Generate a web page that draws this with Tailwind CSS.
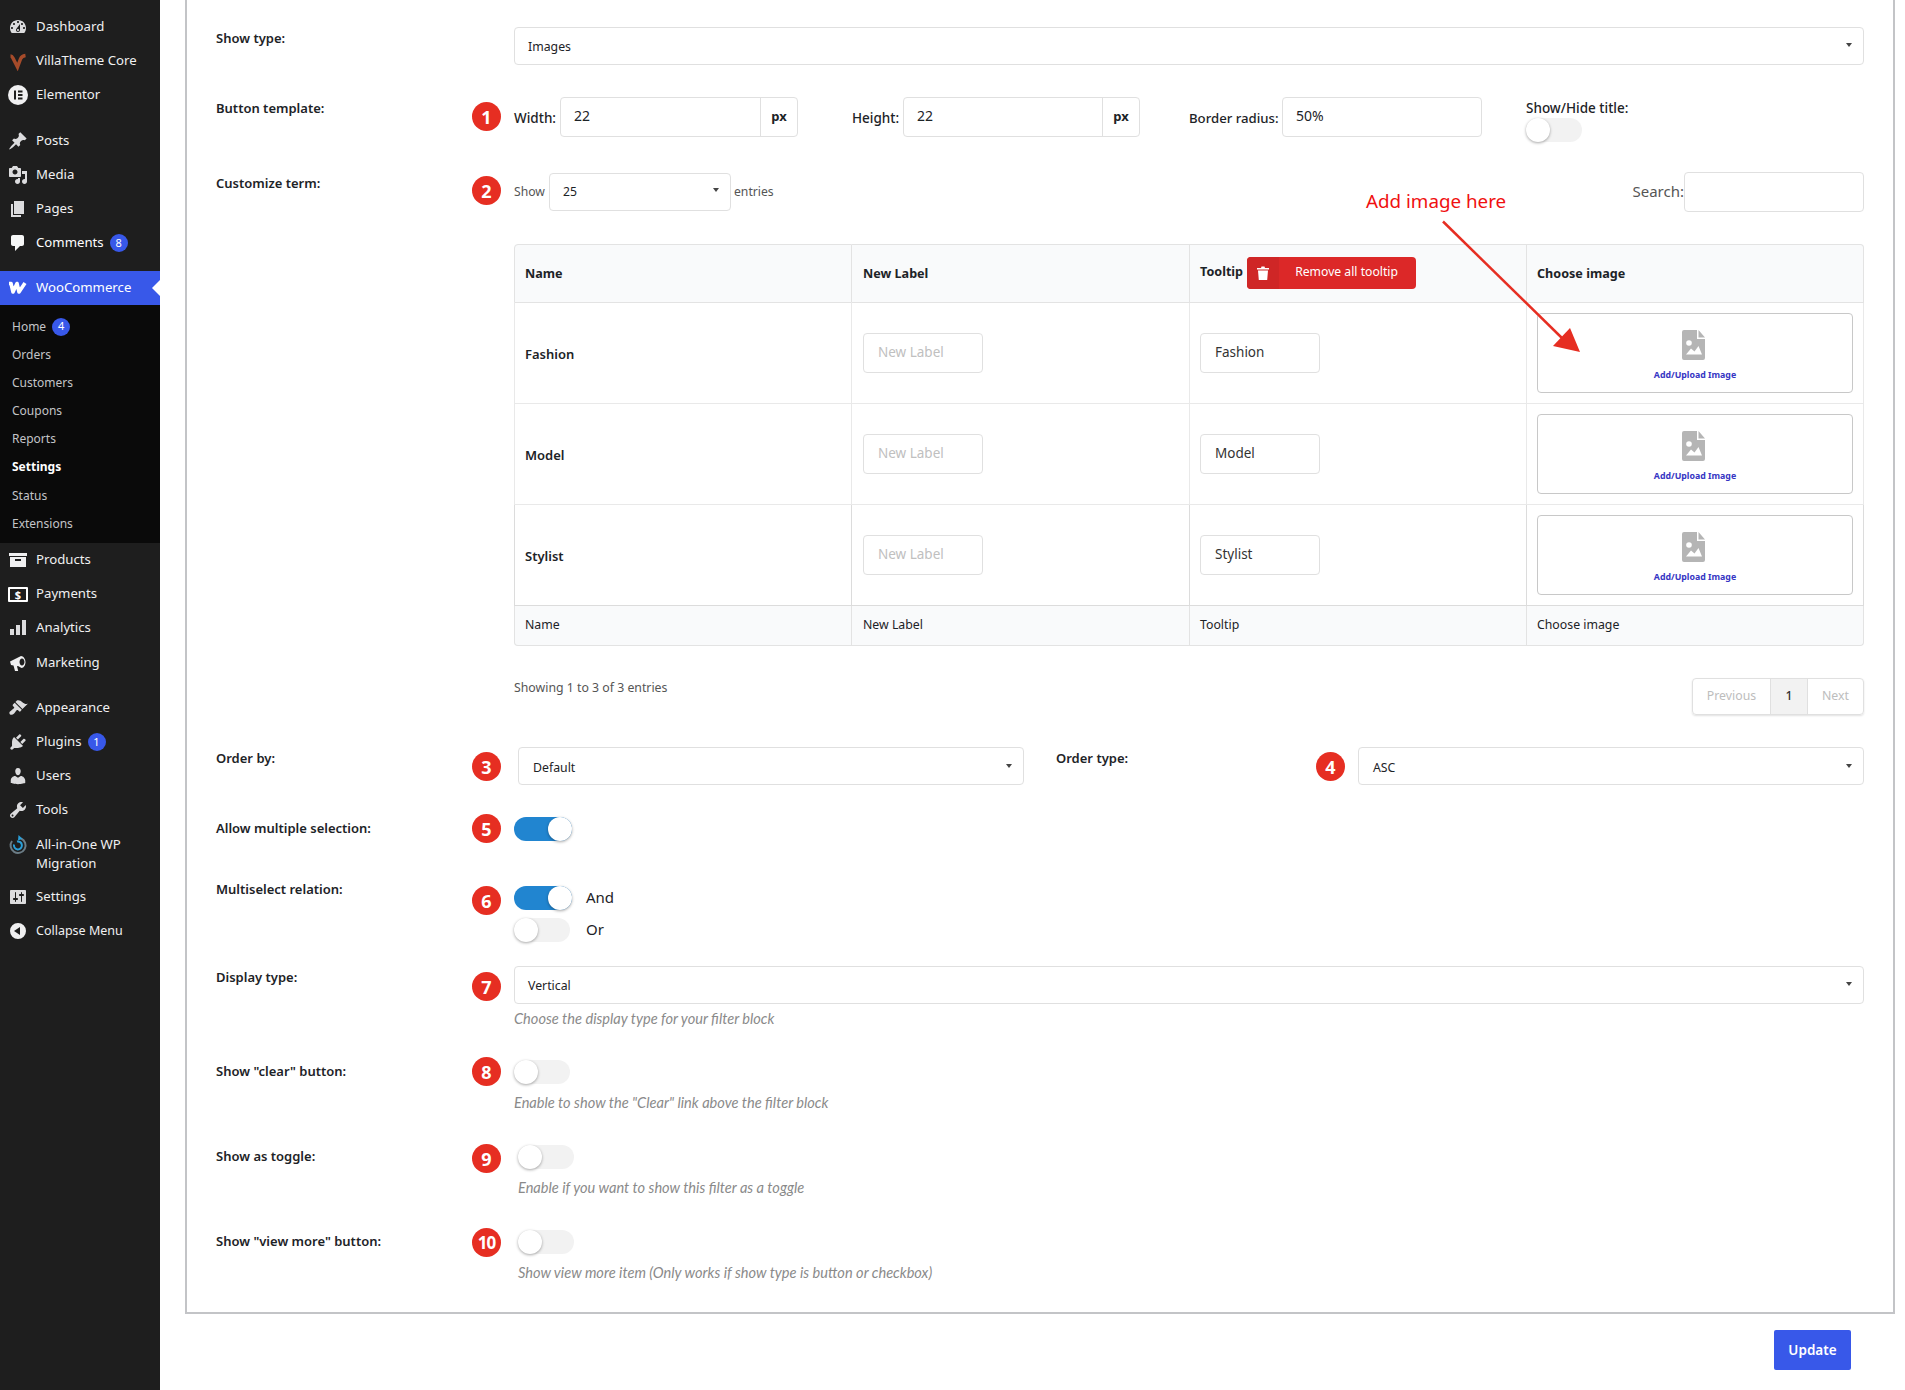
<!doctype html>
<html lang="en">
<head>
<meta charset="utf-8">
<title>Filter settings</title>
<script src="https://cdn.jsdelivr.net/npm/@tailwindcss/browser@4"></script>
</head>
<body class="bg-white">
<div class="flex w-[1905px] h-[1390px] overflow-hidden font-['Noto_Sans',sans-serif] text-[#1d2327]">

<!-- Sidebar -->
<aside class="w-[160px] shrink-0 bg-[#1e1e1e] text-[#f0f0f1] text-[13.2px] pt-[10px]">
  <a class="flex items-center h-[34px]"><span class="w-[36px] flex justify-center"><svg class="w-[20px] h-[20px]" viewBox="0 0 20 20" fill="#dcdcde"><path d="M3.76 16h12.48c1.1-1.37 1.76-3.11 1.76-5 0-4.42-3.58-8-8-8s-8 3.58-8 8c0 1.89.66 3.63 1.76 5zM10 4c.55 0 1 .45 1 1s-.45 1-1 1-1-.45-1-1 .45-1 1-1zM6 6c.55 0 1 .45 1 1s-.45 1-1 1-1-.45-1-1 .45-1 1-1zm8 0c.55 0 1 .45 1 1s-.45 1-1 1-1-.45-1-1 .45-1 1-1zm-5.37 5.55L12 7v6c0 1.1-.9 2-2 2s-2-.9-2-2c0-.57.24-1.08.63-1.45zM4 10c.55 0 1 .45 1 1s-.45 1-1 1-1-.45-1-1 .45-1 1-1zm12 0c.55 0 1 .45 1 1s-.45 1-1 1-1-.45-1-1 .45-1 1-1zm-5 3c0-.55-.45-1-1-1s-1 .45-1 1 .45 1 1 1 1-.45 1-1z" fill-rule="evenodd"/></svg></span>Dashboard</a>
  <a class="flex items-center h-[34px]"><span class="w-[36px] flex justify-center"><svg class="w-[20px] h-[20px]" viewBox="0 0 20 20" fill="none" stroke="#a64b2a" stroke-width="3.500"><path d="M2.500 5c1 0 1.800.8 2.400 2l4.600 9 3-8c.6-1.500 1.500-3 5-3.500"/></svg></span>VillaTheme Core</a>
  <a class="flex items-center h-[34px]"><span class="w-[36px] flex justify-center"><svg class="w-[20px] h-[20px]" viewBox="0 0 20 20"><circle cx="10" cy="10" r="10" fill="#f0f0f1"/><path d="M6 5.500h2v9H6zM10 5.500h4.500v2H10zM10 9h4.500v2H10zM10 12.500h4.500v2H10z" fill="#1e1e1e"/></svg></span>Elementor</a>

  <a class="flex items-center h-[34px] mt-[12px]"><span class="w-[36px] flex justify-center"><svg class="w-[20px] h-[20px]" viewBox="0 0 20 20" fill="#dcdcde"><path d="M10.44 3.020l1.820-1.820 6.360 6.350-1.830 1.820c-1.050-.68-2.480-.57-3.410.36l-.75.75c-.92.93-1.040 2.350-.35 3.410l-1.830 1.820-2.410-2.410-2.800 2.790c-.42.42-3.380 2.710-3.800 2.290s1.860-3.390 2.280-3.810l2.790-2.790L4.100 9.360l1.830-1.820c1.050.69 2.480.57 3.400-.36l.75-.75c.93-.92 1.050-2.350.36-3.410z"/></svg></span>Posts</a>
  <a class="flex items-center h-[34px]"><span class="w-[36px] flex justify-center"><svg class="w-[20px] h-[20px]" viewBox="0 0 20 20" fill="#dcdcde"><path d="M13 11V4c0-.55-.45-1-1-1h-1.670L9 1H5L3.670 3H2c-.55 0-1 .45-1 1v7c0 .55.45 1 1 1h10c.55 0 1-.45 1-1zM7 4.500c1.380 0 2.500 1.120 2.500 2.500S8.380 9.500 7 9.500 4.500 8.380 4.500 7 5.620 4.500 7 4.500zM14 6h5v10.500c0 1.380-1.120 2.500-2.500 2.500S14 17.880 14 16.500s1.120-2.500 2.500-2.500c.17 0 .34.020.5.050V9h-3V6zm-4 8.050V13h2v3.500c0 1.380-1.120 2.500-2.500 2.500S7 17.880 7 16.500 8.120 14 9.500 14c.17 0 .34.020.5.050z"/></svg></span>Media</a>
  <a class="flex items-center h-[34px]"><span class="w-[36px] flex justify-center"><svg class="w-[20px] h-[20px]" viewBox="0 0 20 20" fill="#dcdcde"><path d="M6 15V2h10v13H6zm-1 1h8v2H3V5h2v11z"/></svg></span>Pages</a>
  <a class="flex items-center h-[34px] text-white"><span class="w-[36px] flex justify-center"><svg class="w-[20px] h-[20px]" viewBox="0 0 20 20" fill="#f6f7f7"><path d="M5 2h9c1.100 0 2 .9 2 2v7c0 1.100-.9 2-2 2h-2l-5 5v-5H5c-1.100 0-2-.9-2-2V4c0-1.100.9-2 2-2z"/></svg></span>Comments<span class="ml-[6px] w-[18px] h-[18px] rounded-full bg-[#3858e9] text-white text-[11px] flex items-center justify-center">8</span></a>

  <a class="relative flex items-center h-[34px] mt-[11px] bg-[#3858e9] text-white"><span class="w-[36px] flex justify-center"><svg class="w-[20px] h-[14px]" viewBox="0 0 20 14" fill="none" stroke="#fff" stroke-width="3.600" stroke-linejoin="round"><path d="M1 2.500h2l2 8.500 4-8.500 2 8.500 6-9"/></svg></span>WooCommerce<span class="absolute right-0 top-[9px] w-0 h-0 border-y-[8px] border-y-transparent border-r-[8px] border-r-white"></span></a>
  <div class="bg-[#0a0a0a] text-[#c3c4c7] text-[12px] pt-[7px] pb-[6px] h-[238px]">
    <a class="flex items-center h-[29px] pl-[12px]">Home<span class="ml-[6px] w-[18px] h-[18px] rounded-full bg-[#3858e9] text-white text-[11px] flex items-center justify-center">4</span></a>
    <a class="flex items-center h-[28px] pl-[12px]">Orders</a>
    <a class="flex items-center h-[28px] pl-[12px]">Customers</a>
    <a class="flex items-center h-[28px] pl-[12px]">Coupons</a>
    <a class="flex items-center h-[28px] pl-[12px]">Reports</a>
    <a class="flex items-center h-[28px] pl-[12px] font-bold text-white">Settings</a>
    <a class="flex items-center h-[29px] pl-[12px]">Status</a>
    <a class="flex items-center h-[27px] pl-[12px]">Extensions</a>
  </div>

  <a class="flex items-center h-[34px]"><span class="w-[36px] flex justify-center"><svg class="w-[20px] h-[20px]" viewBox="0 0 20 20" fill="#f0f0f1"><path fill-rule="evenodd" d="M1 3h18v3H1zM2 7h16v10H2zM7 9v2h6V9z"/></svg></span>Products</a>
  <a class="flex items-center h-[34px]"><span class="w-[36px] flex justify-center"><span class="w-[20px] h-[15px] border-2 border-white rounded-[1px] flex items-center justify-center text-[11px] font-bold leading-none text-white">$</span></span>Payments</a>
  <a class="flex items-center h-[34px]"><span class="w-[36px] flex justify-center"><svg class="w-[20px] h-[20px]" viewBox="0 0 20 20" fill="#dcdcde"><path d="M2 11h4v6H2zM8 7h4v10H8zM14 2h4v15h-4z"/></svg></span>Analytics</a>
  <a class="flex items-center h-[34px] mt-[1px]"><span class="w-[36px] flex justify-center"><svg class="w-[20px] h-[20px]" viewBox="0 0 20 20" fill="#f0f0f1"><path fill-rule="evenodd" d="M2 8.500 13 3c1.200 0 2.300.7 3 1.800a7 7 0 0 1 1.500 4.200c0 2.800-1.500 6-4 6l-3.500-2-1 .3 1.200 4.700H7l-1.500-5.500L3 12zM14 5.500c-1.400 0-2.500 1.600-2.500 3.500s1.100 3.500 2.500 3.500 2.500-1.600 2.500-3.500-1.100-3.500-2.500-3.500z"/></svg></span>Marketing</a>

  <a class="flex items-center h-[34px] mt-[11px]"><span class="w-[36px] flex justify-center"><svg class="w-[20px] h-[20px]" viewBox="0 0 20 20" fill="#dcdcde"><path d="M14.480 11.060L7.410 3.990l1.500-1.500c.5-.56 2.300-.47 3.510.32 1.210.8 1.430 1.280 2.910 2.100 1.180.64 2.450 1.260 4.450.85zm-.71.71L6.700 4.700 4.930 6.470c-.39.39-.39 1.020 0 1.410l1.060 1.060c.39.39.39 1.030 0 1.420-.6.6-1.430 1.110-2.210 1.690-.35.26-.7.53-1.010.84C1.430 13.230.91 15 1.840 16.160c1.190 1.180 2.930.66 4.270-.66.31-.31.58-.66.84-1.020.59-.77 1.090-1.600 1.700-2.200.38-.39 1.020-.39 1.410 0l1.060 1.060c.39.39 1.020.39 1.410 0z"/></svg></span>Appearance</a>
  <a class="flex items-center h-[34px]"><span class="w-[36px] flex justify-center"><svg class="w-[20px] h-[20px]" viewBox="0 0 20 20" fill="#dcdcde"><path d="M13.110 4.360L9.870 7.600 8 5.730l3.240-3.240c.35-.34 1.050-.2 1.560.32.52.51.66 1.210.31 1.550zm-8 1.770l.91-1.120 9.010 9.010-1.190.84c-.71.71-2.630 1.160-3.820 1.160H6.140L4.900 17.260c-.59.59-1.540.59-2.120 0-.59-.58-.59-1.530 0-2.120l1.240-1.240v-3.880c0-1.130.4-3.190 1.090-3.890zm7.260 3.970l3.240-3.240c.34-.35 1.040-.21 1.550.31.52.51.66 1.210.31 1.550l-3.240 3.250z"/></svg></span>Plugins<span class="ml-[6px] w-[18px] h-[18px] rounded-full bg-[#3858e9] text-white text-[11px] flex items-center justify-center">1</span></a>
  <a class="flex items-center h-[34px]"><span class="w-[36px] flex justify-center"><svg class="w-[20px] h-[20px]" viewBox="0 0 20 20" fill="#dcdcde"><path d="M10 9.250c-2.270 0-2.730-3.440-2.730-3.440C7 4.020 7.820 2 9.970 2c2.160 0 2.980 2.020 2.710 3.810 0 0-.41 3.440-2.680 3.440zm0 2.570L12.720 10c2.390 0 4.520 2.330 4.520 4.530v2.490s-3.650 1.130-7.240 1.130c-3.650 0-7.240-1.130-7.240-1.130v-2.490c0-2.250 1.940-4.480 4.470-4.480z"/></svg></span>Users</a>
  <a class="flex items-center h-[34px]"><span class="w-[36px] flex justify-center"><svg class="w-[20px] h-[20px]" viewBox="0 0 20 20" fill="#dcdcde"><path d="M16.680 9.770c-1.340 1.340-3.300 1.670-4.950.99l-5.410 6.520c-.99.99-2.590.99-3.580 0s-.99-2.590 0-3.570l6.520-5.420c-.68-1.650-.35-3.610.99-4.950 1.280-1.280 3.120-1.620 4.720-1.060l-2.890 2.890 2.820 2.820 2.860-2.870c.53 1.580.18 3.390-1.080 4.650zM3.810 16.210c.4.39 1.040.39 1.430 0 .4-.4.4-1.040 0-1.430-.39-.4-1.030-.4-1.430 0-.39.39-.39 1.030 0 1.430z"/></svg></span>Tools</a>
  <a class="flex h-[53px] pt-[8px] leading-[19px]"><span class="w-[36px] flex justify-center"><svg class="w-[20px] h-[20px]" viewBox="0 0 20 20" fill="none"><path d="M13 3.500A7.500 7.500 0 1 1 4 6" stroke="#6b7c85" stroke-width="2"/><path d="M6 9.500a4 4 0 1 0 3-3" stroke="#2a9fd8" stroke-width="2"/><path d="M10.500 0l4 3.800-4.500 1.700z" fill="#2a9fd8"/></svg></span><span>All-in-One WP<br>Migration</span></a>
  <a class="flex items-center h-[34px]"><span class="w-[36px] flex justify-center"><svg class="w-[20px] h-[20px]" viewBox="0 0 20 20" fill="#dcdcde"><path d="M18 16V4c0-.55-.45-1-1-1H3c-.55 0-1 .45-1 1v12c0 .55.45 1 1 1h14c.55 0 1-.45 1-1zM8 11h1c.55 0 1 .45 1 1s-.45 1-1 1H8v1.500c0 .28-.22.5-.5.5s-.5-.22-.5-.5V13H6c-.55 0-1-.45-1-1s.45-1 1-1h1V5.500c0-.28.22-.5.5-.5s.5.22.5.5V11zm5-2h-1c-.55 0-1-.45-1-1s.45-1 1-1h1V5.500c0-.28.22-.5.5-.5s.5.22.5.5V7h1c.55 0 1 .45 1 1s-.45 1-1 1h-1v5.500c0 .28-.22.5-.5.5s-.5-.22-.5-.5V9z"/></svg></span>Settings</a>
  <a class="flex items-center h-[34px] text-[12.5px]"><span class="w-[36px] flex justify-center"><svg class="w-[20px] h-[20px]" viewBox="0 0 20 20" fill="#f0f0f1"><path fill-rule="evenodd" d="M10 2a8 8 0 1 0 0 16 8 8 0 0 0 0-16zm2 4v8l-6-4z"/></svg></span>Collapse Menu</a>
</aside>

<!-- Main -->
<main class="relative flex-1 pl-[25px]">
  <div class="relative w-[1710px] h-[1314px] border-x-2 border-b-2 border-[#c3c4c7] pt-[27px] pl-[29px] text-[13px]">

    <!-- Show type -->
    <div class="flex h-[70px]">
      <div class="w-[298px] mt-px h-[20px] leading-[20px] font-semibold">Show type:</div>
      <div class="relative flex items-center w-[1350px] h-[38px] border border-[#e0e0e0] rounded-[4px] pl-[13px] pt-[3px] text-[12.3px]">Images<span class="absolute right-[11px] top-[15px] border-x-[3.500px] border-x-transparent border-t-[4px] border-t-[#444]"></span></div>
    </div>

    <!-- Button template -->
    <div class="flex h-[75px]">
      <div class="w-[256px] mt-px h-[20px] leading-[20px] font-semibold">Button template:</div>
      <div class="w-[29px] h-[29px] mt-[5px] mr-[13px] rounded-full bg-[#e62e22] text-white flex items-center justify-center text-[18px] font-bold leading-none">1</div>
      <div class="flex w-[1350px] items-start">
        <span class="mt-[11px] mr-[4px] w-[42px] font-medium text-[13.5px] leading-[20px]">Width:</span>
        <div class="flex w-[238px] h-[40px] border border-[#e0e0e0] rounded-[4px]"><span class="flex-1 pl-[13px] pt-[7px] text-[14px]">22</span><span class="w-[37px] border-l border-[#e0e0e0] flex items-center justify-center font-bold">px</span></div>
        <span class="mt-[11px] ml-[54px] mr-[4px] w-[47px] font-medium text-[13.5px] leading-[20px]">Height:</span>
        <div class="flex w-[237px] h-[40px] border border-[#e0e0e0] rounded-[4px]"><span class="flex-1 pl-[13px] pt-[7px] text-[14px]">22</span><span class="w-[37px] border-l border-[#e0e0e0] flex items-center justify-center font-bold">px</span></div>
        <span class="mt-[11px] ml-[49px] mr-[4px] w-[89px] font-medium text-[13.2px] leading-[20px] whitespace-nowrap">Border radius:</span>
        <div class="w-[200px] h-[40px] border border-[#e0e0e0] rounded-[4px] pl-[13px] pt-[7px] text-[14px]">50%</div>
        <div class="ml-[44px]">
          <div class="h-[20px] mt-px leading-[20px] font-medium text-[13.5px]">Show/Hide title:</div>
          <div class="relative w-[56px] h-[24px] rounded-full bg-[#f2f2f2]"><span class="absolute left-0 top-0 w-[24px] h-[24px] rounded-full bg-white shadow-[0_1px_3px_rgba(0,0,0,.35)]"></span></div>
        </div>
      </div>
    </div>

    <!-- Customize term -->
    <div class="flex h-[575px]">
      <div class="w-[256px] mt-px h-[20px] leading-[20px] font-semibold">Customize term:</div>
      <div class="w-[29px] h-[29px] mt-[4px] mr-[13px] rounded-full bg-[#e62e22] text-white flex items-center justify-center text-[18px] font-bold leading-none">2</div>
      <div class="w-[1350px]">
        <div class="flex items-center h-[39px] text-[12.2px]">
          <span class="text-[#555] w-[35px] pt-px">Show</span>
          <div class="relative flex items-center w-[182px] h-[38px] border border-[#e0e0e0] rounded-[4px] pl-[13px] pt-[2px]">25<span class="absolute right-[11px] top-[14px] border-x-[3.500px] border-x-transparent border-t-[4px] border-t-[#444]"></span></div>
          <span class="ml-[3px] text-[#555] pt-px">entries</span>
          <span class="ml-auto text-[#555] text-[15px] -mt-px">Search:</span>
          <div class="w-[180px] h-[40px] border border-[#e0e0e0] rounded-[4px]"></div>
        </div>

        <table class="mt-[33px] w-[1350px] table-fixed border-separate border-spacing-0">
          <colgroup><col class="w-[338px]"><col class="w-[338px]"><col class="w-[337px]"><col class="w-[337px]"></colgroup>
          <thead>
            <tr class="h-[59px] bg-[#f9fafb] text-left font-bold text-[12.6px]">
              <th class="border border-[#e3e3e3] rounded-tl-[4px] pl-[10px] pt-px font-bold">Name</th>
              <th class="border-y border-r border-[#e3e3e3] pl-[11px] pt-px font-bold">New Label</th>
              <th class="border-y border-r border-[#e3e3e3] pl-[10px] font-bold"><div class="flex items-center"><span class="mr-[4px] -mt-[2px]">Tooltip</span><span class="flex items-center w-[169px] h-[32px] -mt-[2px] rounded-[4px] bg-[#dc2828] text-white font-normal overflow-hidden"><span class="w-[32px] h-[32px] bg-[#cf2626] flex items-center justify-center"><svg class="w-[12px] h-[14px]" viewBox="0 0 12 14" fill="#fff"><path d="M0 2h4l.5-1.500h3L8 2h4v1.500H0zM1 4.500h10l-.8 9.500H1.800z"/></svg></span><span class="flex-1 text-center text-[12.2px] pr-[2px] -mt-[1px]">Remove all tooltip</span></span></div></th>
              <th class="border-y border-r border-[#e3e3e3] rounded-tr-[4px] pl-[10px] pt-px font-bold">Choose image</th>
            </tr>
          </thead>
          <tbody>
            <tr class="h-[101px]">
              <td class="border-x border-b border-[#e9e9e9] pl-[10px] pt-[3px] font-semibold">Fashion</td>
              <td class="border-r border-b border-[#e9e9e9] pl-[11px]"><div class="w-[120px] h-[40px] border border-[#e0e0e0] rounded-[4px] flex items-center pl-[14px] pb-[2px] text-[13.5px] text-[#c0c0c0]">New Label</div></td>
              <td class="border-r border-b border-[#e9e9e9] pl-[10px]"><div class="w-[120px] h-[40px] border border-[#e0e0e0] rounded-[4px] flex items-center pl-[14px] pb-[2px] text-[13.5px] text-[#333]">Fashion</div></td>
              <td class="border-r border-b border-[#e9e9e9] px-[10px]"><div class="h-[80px] border border-[#c8c8c8] rounded-[4px] flex flex-col items-center pt-[16px]"><svg class="w-[23px] h-[30px] -ml-[3px]" viewBox="0 0 23 30"><path d="M2 0h13v9h8v19a2 2 0 0 1-2 2H2a2 2 0 0 1-2-2V2a2 2 0 0 1 2-2zM16.500 0 23 7.500h-6.500z" fill="#b5b5b5"/><circle cx="7" cy="13" r="2.800" fill="#fff"/><path d="M4 24.500l5-6 3.500 3 4-5.500 3.500 8.500z" fill="#fff"/></svg><span class="mt-[8px] text-[8.8px] leading-[14px] font-bold text-[#3636c4]">Add/Upload Image</span></div></td>
            </tr>
            <tr class="h-[101px]">
              <td class="border-x border-b border-[#e9e9e9] pl-[10px] pt-[3px] font-semibold">Model</td>
              <td class="border-r border-b border-[#e9e9e9] pl-[11px]"><div class="w-[120px] h-[40px] border border-[#e0e0e0] rounded-[4px] flex items-center pl-[14px] pb-[2px] text-[13.5px] text-[#c0c0c0]">New Label</div></td>
              <td class="border-r border-b border-[#e9e9e9] pl-[10px]"><div class="w-[120px] h-[40px] border border-[#e0e0e0] rounded-[4px] flex items-center pl-[14px] pb-[2px] text-[13.5px] text-[#333]">Model</div></td>
              <td class="border-r border-b border-[#e9e9e9] px-[10px]"><div class="h-[80px] border border-[#c8c8c8] rounded-[4px] flex flex-col items-center pt-[16px]"><svg class="w-[23px] h-[30px] -ml-[3px]" viewBox="0 0 23 30"><path d="M2 0h13v9h8v19a2 2 0 0 1-2 2H2a2 2 0 0 1-2-2V2a2 2 0 0 1 2-2zM16.500 0 23 7.500h-6.500z" fill="#b5b5b5"/><circle cx="7" cy="13" r="2.800" fill="#fff"/><path d="M4 24.500l5-6 3.500 3 4-5.500 3.500 8.500z" fill="#fff"/></svg><span class="mt-[8px] text-[8.8px] leading-[14px] font-bold text-[#3636c4]">Add/Upload Image</span></div></td>
            </tr>
            <tr class="h-[101px]">
              <td class="border-x border-b border-[#dcdcdc] pl-[10px] pt-[3px] font-semibold">Stylist</td>
              <td class="border-r border-b border-[#dcdcdc] pl-[11px]"><div class="w-[120px] h-[40px] border border-[#e0e0e0] rounded-[4px] flex items-center pl-[14px] pb-[2px] text-[13.5px] text-[#c0c0c0]">New Label</div></td>
              <td class="border-r border-b border-[#dcdcdc] pl-[10px]"><div class="w-[120px] h-[40px] border border-[#e0e0e0] rounded-[4px] flex items-center pl-[14px] pb-[2px] text-[13.5px] text-[#333]">Stylist</div></td>
              <td class="border-r border-b border-[#dcdcdc] px-[10px]"><div class="h-[80px] border border-[#c8c8c8] rounded-[4px] flex flex-col items-center pt-[16px]"><svg class="w-[23px] h-[30px] -ml-[3px]" viewBox="0 0 23 30"><path d="M2 0h13v9h8v19a2 2 0 0 1-2 2H2a2 2 0 0 1-2-2V2a2 2 0 0 1 2-2zM16.500 0 23 7.500h-6.500z" fill="#b5b5b5"/><circle cx="7" cy="13" r="2.800" fill="#fff"/><path d="M4 24.500l5-6 3.500 3 4-5.500 3.500 8.500z" fill="#fff"/></svg><span class="mt-[8px] text-[8.8px] leading-[14px] font-bold text-[#3636c4]">Add/Upload Image</span></div></td>
            </tr>
          </tbody>
          <tfoot>
            <tr class="h-[40px] bg-[#f9fafb] text-[12.3px]">
              <td class="border-x border-b border-[#e3e3e3] rounded-bl-[4px] pl-[10px]">Name</td>
              <td class="border-r border-b border-[#e3e3e3] pl-[11px]">New Label</td>
              <td class="border-r border-b border-[#e3e3e3] pl-[10px]">Tooltip</td>
              <td class="border-r border-b border-[#e3e3e3] rounded-br-[4px] pl-[10px]">Choose image</td>
            </tr>
          </tfoot>
        </table>

        <div class="flex justify-between mt-[32px] text-[12.3px]">
          <div class="text-[#555] leading-[20px]">Showing 1 to 3 of 3 entries</div>
          <div class="flex w-[172px] h-[37px] border border-[#e0e0e0] rounded-[4px] shadow-[0_1px_2px_rgba(0,0,0,.12)] text-[#bdbdbd]">
            <span class="w-[77px] flex items-center justify-center pb-px">Previous</span>
            <span class="w-[38px] flex items-center justify-center bg-[#f2f2f2] text-[#333] border-x border-[#e0e0e0] font-medium pb-px">1</span>
            <span class="flex-1 flex items-center justify-center pb-px">Next</span>
          </div>
        </div>
      </div>
    </div>

    <!-- Order -->
    <div class="flex h-[70px]">
      <div class="w-[256px] mt-px h-[20px] leading-[20px] font-semibold">Order by:</div>
      <div class="w-[29px] h-[29px] mt-[5px] mr-[17px] rounded-full bg-[#e62e22] text-white flex items-center justify-center text-[18px] font-bold leading-none">3</div>
      <div class="relative flex items-center w-[506px] h-[38px] border border-[#e0e0e0] rounded-[4px] pl-[14px] pt-[4px] text-[12.3px]">Default<span class="absolute right-[11px] top-[16px] border-x-[3.500px] border-x-transparent border-t-[4px] border-t-[#444]"></span></div>
      <div class="ml-[32px] w-[259px] mt-px h-[20px] leading-[20px] font-semibold">Order type:</div>
      <div class="w-[29px] h-[29px] mt-[5px] ml-[1px] mr-[13px] rounded-full bg-[#e62e22] text-white flex items-center justify-center text-[18px] font-bold leading-none">4</div>
      <div class="relative flex items-center w-[506px] h-[38px] border border-[#e0e0e0] rounded-[4px] pl-[14px] pt-[4px] text-[12.3px]">ASC<span class="absolute right-[11px] top-[16px] border-x-[3.500px] border-x-transparent border-t-[4px] border-t-[#444]"></span></div>
    </div>

    <!-- Allow multiple -->
    <div class="flex h-[62px]">
      <div class="w-[256px] mt-px h-[20px] leading-[20px] font-semibold">Allow multiple selection:</div>
      <div class="w-[29px] h-[29px] -mt-[3px] mr-[13px] rounded-full bg-[#e62e22] text-white flex items-center justify-center text-[18px] font-bold leading-none">5</div>
      <div class="relative w-[58px] h-[24px] rounded-full bg-[#2185d0]"><span class="absolute right-0 top-0 w-[24px] h-[24px] rounded-full bg-white shadow-[0_1px_3px_rgba(0,0,0,.35)]"></span></div>
    </div>

    <!-- Multiselect -->
    <div class="flex h-[87px]">
      <div class="w-[256px] h-[20px] leading-[20px] font-semibold">Multiselect relation:</div>
      <div class="w-[29px] h-[29px] mt-[7px] mr-[13px] rounded-full bg-[#e62e22] text-white flex items-center justify-center text-[18px] font-bold leading-none">6</div>
      <div class="pt-[7px] flex flex-col gap-[8px] text-[15px]">
        <div class="flex items-center h-[24px]"><div class="relative w-[58px] h-[24px] rounded-full bg-[#2185d0]"><span class="absolute right-0 top-0 w-[24px] h-[24px] rounded-full bg-white shadow-[0_1px_3px_rgba(0,0,0,.35)]"></span></div><span class="ml-[14px] -mt-[2px]">And</span></div>
        <div class="flex items-center h-[24px]"><div class="relative w-[56px] h-[24px] rounded-full bg-[#f2f2f2] mr-[2px]"><span class="absolute left-0 top-0 w-[24px] h-[24px] rounded-full bg-white shadow-[0_1px_3px_rgba(0,0,0,.35)]"></span></div><span class="ml-[14px] -mt-[2px]">Or</span></div>
      </div>
    </div>

    <!-- Display type -->
    <div class="flex h-[94px]">
      <div class="w-[256px] mt-px h-[20px] leading-[20px] font-semibold">Display type:</div>
      <div class="w-[29px] h-[29px] mt-[6px] mr-[13px] rounded-full bg-[#e62e22] text-white flex items-center justify-center text-[18px] font-bold leading-none">7</div>
      <div class="w-[1350px]">
        <div class="relative flex items-center h-[38px] border border-[#e0e0e0] rounded-[4px] pl-[13px] pt-[3px] text-[12.3px]">Vertical<span class="absolute right-[11px] top-[15px] border-x-[3.500px] border-x-transparent border-t-[4px] border-t-[#444]"></span></div>
        <div class="mt-[5px] font-['Lato',sans-serif] italic text-[14.6px] leading-[20px] text-[#8a8a8a]">Choose the display type for your filter block</div>
      </div>
    </div>

    <!-- Clear -->
    <div class="flex h-[85px]">
      <div class="w-[256px] mt-px h-[20px] leading-[20px] font-semibold">Show "clear" button:</div>
      <div class="w-[29px] h-[29px] -mt-[3px] mr-[13px] rounded-full bg-[#e62e22] text-white flex items-center justify-center text-[18px] font-bold leading-none">8</div>
      <div>
        <div class="relative w-[56px] h-[24px] rounded-full bg-[#f2f2f2]"><span class="absolute left-0 top-0 w-[24px] h-[24px] rounded-full bg-white shadow-[0_1px_3px_rgba(0,0,0,.35)]"></span></div>
        <div class="mt-[9px] font-['Lato',sans-serif] italic text-[14.6px] leading-[20px] text-[#8a8a8a]">Enable to show the "Clear" link above the filter block</div>
      </div>
    </div>

    <!-- Toggle -->
    <div class="flex h-[85px]">
      <div class="w-[256px] mt-[1px] h-[20px] leading-[20px] font-semibold">Show as toggle:</div>
      <div class="w-[29px] h-[29px] -mt-px mr-[17px] rounded-full bg-[#e62e22] text-white flex items-center justify-center text-[18px] font-bold leading-none">9</div>
      <div>
        <div class="relative w-[56px] h-[24px] rounded-full bg-[#f2f2f2]"><span class="absolute left-0 top-0 w-[24px] h-[24px] rounded-full bg-white shadow-[0_1px_3px_rgba(0,0,0,.35)]"></span></div>
        <div class="mt-[9px] font-['Lato',sans-serif] italic text-[14.6px] leading-[20px] text-[#8a8a8a]">Enable if you want to show this filter as a toggle</div>
      </div>
    </div>

    <!-- View more -->
    <div class="flex h-[83px]">
      <div class="w-[256px] mt-[1px] h-[20px] leading-[20px] font-semibold">Show "view more" button:</div>
      <div class="w-[29px] h-[29px] -mt-[2px] mr-[17px] rounded-full bg-[#e62e22] text-white flex items-center justify-center text-[17px] font-bold leading-none tracking-[-1px]">10</div>
      <div>
        <div class="relative w-[56px] h-[24px] rounded-full bg-[#f2f2f2]"><span class="absolute left-0 top-0 w-[24px] h-[24px] rounded-full bg-white shadow-[0_1px_3px_rgba(0,0,0,.35)]"></span></div>
        <div class="mt-[9px] font-['Lato',sans-serif] italic text-[14.6px] leading-[20px] text-[#8a8a8a]">Show view more item (Only works if show type is button or checkbox)</div>
      </div>
    </div>

    <!-- annotation overlay -->
    <div class="absolute left-[1179px] top-[188px] text-[18.8px] leading-[26px] text-[#f01010] whitespace-nowrap">Add image here</div>
    <svg class="absolute left-[1250px] top-[215px] w-[150px] h-[145px]" viewBox="0 0 150 145" fill="#e62e22"><path d="M6 6.500 127 125" stroke="#e62e22" stroke-width="2.500"/><path d="M143 137 116 131 133 113z"/></svg>
  </div>

  <div class="flex justify-end w-[1666px] mt-[16px]">
    <button class="w-[77px] h-[40px] bg-[#3858e9] rounded-[2px] text-white text-[13.5px] font-semibold">Update</button>
  </div>
</main>
</div>
</body>
</html>
